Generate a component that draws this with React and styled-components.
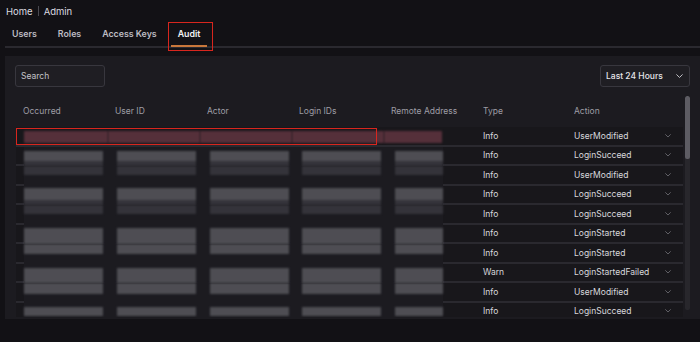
import React from "react";
import styled, { createGlobalStyle } from "styled-components";

const GlobalStyle = createGlobalStyle`
  html, body {
    margin: 0;
    padding: 0;
    background: #121115;
    font-family: Inter, "Noto Sans", sans-serif;
  }
`;

const Page = styled.div`
  height: 342px;
  padding: 4px 0 0 5px;
  box-sizing: border-box;
  overflow: hidden;
  background: #121115;
`;

const Breadcrumb = styled.div`
  display: flex;
  align-items: center;
  height: 14px;
  padding-left: 1px;
  font-size: 9.5px;
  color: #dcdbe0;
`;

const Divider = styled.span`
  width: 1px;
  height: 10px;
  margin: 0 5px;
  background: #4a4950;
`;

const TabBar = styled.div`
  display: flex;
  gap: 7px;
  margin-top: 4px;
  border-bottom: 2px solid #2a292f;
`;

const Tab = styled.div`
  position: relative;
  display: flex;
  align-items: center;
  height: 25px;
  padding: 0 7px;
  box-sizing: border-box;
  font-size: 8.8px;
  font-weight: 600;
  color: ${(p) => (p.$active ? "#f2f1f4" : "#bdbcc3")};
  border-bottom: 2px solid ${(p) => (p.$active ? "#c8773b" : "transparent")};
  margin-bottom: -1px;

  ${(p) =>
    p.$marked &&
    `
    &::after {
      content: "";
      position: absolute;
      left: -3px;
      top: 0;
      right: -6px;
      bottom: -6px;
      border: 1.5px solid #d8261e;
    }
  `}
`;

const Panel = styled.div`
  margin-top: 8px;
  height: 263px;
  padding: 9px 10px 2px;
  box-sizing: border-box;
  background: #1c1b20;
`;

const Toolbar = styled.div`
  display: flex;
  justify-content: space-between;
  align-items: center;
  height: 22px;
`;

const Field = styled.div`
  display: flex;
  align-items: center;
  justify-content: space-between;
  width: ${(p) => p.$width}px;
  height: 22px;
  padding: 0 6px 0 5px;
  box-sizing: border-box;
  border: 1px solid #38373e;
  border-radius: 3px;
  background: #1f1e23;
  font-size: 8.5px;
  font-weight: ${(p) => (p.$bold ? 500 : 400)};
  color: ${(p) => (p.$bold ? "#e6e5ea" : "#c4c3c9")};
`;

const TableWrap = styled.div`
  display: flex;
  gap: 2px;
  margin-top: 9px;
  height: 221px;
  overflow: hidden;
`;

const Table = styled.div`
  width: 667px;
  margin-left: 1px;
  overflow: hidden;
`;

const Scrollbar = styled.div`
  width: 5px;
  height: 214px;
  border-radius: 2px;
  background: #28272c;
  overflow: hidden;

  &::before {
    content: "";
    display: block;
    height: 63px;
    border-radius: 2px;
    background: #5d5c63;
  }
`;

const cols = "92px 92px 92px 92px 92px 91px 116px";

const HeadRow = styled.div`
  display: grid;
  grid-template-columns: ${cols};
  height: 31px;
  padding-bottom: 1px;
  box-sizing: border-box;
  align-items: center;
  font-size: 8.5px;
  color: #9e9da5;
`;

const HeadCell = styled.div`
  padding-left: 7px;
  white-space: nowrap;
`;

const Row = styled.div`
  position: relative;
  display: grid;
  grid-template-columns: ${cols};
  height: 19.5px;
  box-sizing: border-box;
  border-bottom: 2px solid #2a292f;
  background: #18171b;
  font-size: 8.5px;
  color: #d9d8dd;
`;

const RowMark = styled.div`
  position: absolute;
  left: 0;
  top: 1px;
  width: 361px;
  bottom: 0;
  border: 1.5px solid #d8261e;
  box-sizing: border-box;
  pointer-events: none;
`;

const Cell = styled.div`
  display: flex;
  align-items: center;
  padding-left: 7px;
  white-space: nowrap;
`;

const ActionCell = styled(Cell)`
  justify-content: space-between;
  padding-right: 12px;
`;

const RedactCell = styled.div`
  height: calc(100% + 2px);
  padding-left: ${(p) => p.$inset}px;
  box-sizing: border-box;
  background: linear-gradient(
    to right,
    transparent 0 ${(p) => p.$from}px,
    #1c1b20 ${(p) => p.$from}px ${(p) => p.$to}px,
    transparent ${(p) => p.$to}px
  );
`;

const Redact = styled.div`
  width: ${(p) => p.$width}px;
  height: 100%;
  background: ${(p) => p.$fill};
  filter: blur(1.3px);
`;

const L = "#4e4d53";
const D = "#34333a";
const N = "transparent";

const fills = [
  "linear-gradient(to bottom, transparent 0 22%, #55303a 22% 80%, transparent 80%)",
  `linear-gradient(to bottom, ${N} 0 22%, ${L} 22% 74%, ${D} 74%)`,
  `linear-gradient(to bottom, ${D} 0 45%, ${N} 45%)`,
  `linear-gradient(to bottom, ${N} 0 10%, ${L} 10% 76%, ${D} 76%)`,
  `linear-gradient(to bottom, ${D} 0 47%, ${N} 47%)`,
  `linear-gradient(to bottom, ${N} 0 15%, ${L} 15%)`,
  `linear-gradient(to bottom, ${L} 0 50%, ${N} 50%)`,
  `linear-gradient(to bottom, ${N} 0 20%, ${L} 20%)`,
  `linear-gradient(to bottom, ${L} 0 55%, ${N} 55%)`,
  `linear-gradient(to bottom, ${N} 0 20%, ${L} 20% 68%, ${N} 68%)`,
];

const rows = [
  ["Info", "UserModified"],
  ["Info", "LoginSucceed"],
  ["Info", "UserModified"],
  ["Info", "LoginSucceed"],
  ["Info", "LoginSucceed"],
  ["Info", "LoginStarted"],
  ["Info", "LoginStarted"],
  ["Warn", "LoginStartedFailed"],
  ["Info", "UserModified"],
  ["Info", "LoginSucceed"],
];

// blurred columns: inset of the smear, its width, and the span that hides the row rule
const redactCols = [
  { inset: 8, width: 79, from: 8, to: 92 },
  { inset: 9, width: 79, from: 0, to: 92 },
  { inset: 10, width: 79, from: 0, to: 92 },
  { inset: 10, width: 79, from: 0, to: 92 },
  { inset: 11, width: 48, from: 0, to: 59 },
];

// the highlighted row is one continuous smear
const markedCols = [
  { inset: 8, width: 84 },
  { inset: 0, width: 92 },
  { inset: 0, width: 92 },
  { inset: 0, width: 92 },
  { inset: 0, width: 58 },
];

const headers = ["Occurred", "User ID", "Actor", "Login IDs", "Remote Address", "Type", "Action"];

const Chevron = ({ size = 7, color = "#77767d" }) => (
  <svg width={size} height={size * 0.6} viewBox="0 0 10 6" fill="none">
    <polyline points="1,1 5,5 9,1" stroke={color} strokeWidth="1.3" strokeLinecap="round" strokeLinejoin="round" />
  </svg>
);

export default function App() {
  return (
    <Page>
      <GlobalStyle />
      <Breadcrumb>
        Home
        <Divider />
        Admin
      </Breadcrumb>
      <TabBar>
        <Tab>Users</Tab>
        <Tab>Roles</Tab>
        <Tab>Access Keys</Tab>
        <Tab $active $marked>
          Audit
        </Tab>
      </TabBar>
      <Panel>
        <Toolbar>
          <Field $width={90}>Search</Field>
          <Field $width={90} $bold>
            Last 24 Hours
            <Chevron size={7} color="#d0cfd5" />
          </Field>
        </Toolbar>
        <TableWrap>
          <Table>
            <HeadRow>
              {headers.map((h) => (
                <HeadCell key={h}>{h}</HeadCell>
              ))}
            </HeadRow>
            {rows.map(([type, action], i) => {
              const marked = i === 0;
              return (
                <Row key={i}>
                  {redactCols.map((c, j) => (
                    <RedactCell
                      key={j}
                      $inset={marked ? markedCols[j].inset : c.inset}
                      $from={marked ? 0 : c.from}
                      $to={marked ? 0 : c.to}
                    >
                      <Redact
                        $width={marked ? markedCols[j].width : c.width}
                        $fill={fills[i]}
                      />
                    </RedactCell>
                  ))}
                  <Cell>{type}</Cell>
                  <ActionCell>
                    {action}
                    <Chevron size={6} />
                  </ActionCell>
                  {marked && <RowMark />}
                </Row>
              );
            })}
          </Table>
          <Scrollbar />
        </TableWrap>
      </Panel>
    </Page>
  );
}
